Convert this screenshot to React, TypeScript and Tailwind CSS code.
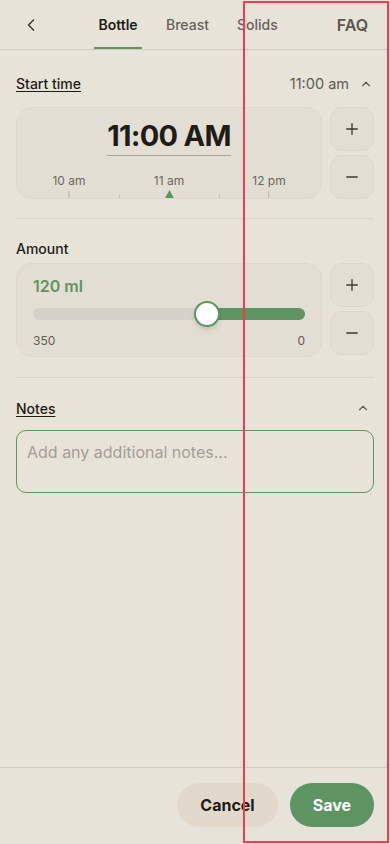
import { ChevronLeft, ChevronUp, Minus, Plus } from "lucide-react";

const font = { fontFamily: "Inter, 'Noto Sans', sans-serif" };

function StepButtons() {
  return (
    <div className="flex flex-col gap-1">
      <button className="flex h-[44px] w-[44px] items-center justify-center rounded-xl border border-[#dcd7cd] bg-[#e3ded4] text-[#3d3a35]">
        <Plus className="h-[18px] w-[18px]" strokeWidth={1.8} />
      </button>
      <button className="flex h-[44px] w-[44px] items-center justify-center rounded-xl border border-[#dcd7cd] bg-[#e3ded4] text-[#3d3a35]">
        <Minus className="h-[18px] w-[18px]" strokeWidth={1.8} />
      </button>
    </div>
  );
}

export default function App() {
  return (
    <div
      className="relative flex h-[844px] w-[390px] flex-col overflow-hidden bg-[#e8e3d9] text-[#1f1c18]"
      style={font}
    >
      {/* header */}
      <div className="flex h-[50px] shrink-0 items-stretch border-b border-[#d0cac0] px-4">
        <button className="flex w-[30px] items-center justify-center text-[#3d3a35]">
          <ChevronLeft className="h-5 w-5" strokeWidth={1.8} />
        </button>
        <div className="ml-[48px] flex items-stretch">
          <div className="flex w-[48px] flex-col items-center justify-center border-b-2 border-[#5e9462] pt-[2px] text-[14px] font-semibold text-[#1f1c18]">
            Bottle
          </div>
          <div className="ml-[24px] flex items-center text-[14px] font-medium text-[#66625b]">Breast</div>
          <div className="ml-[28px] flex items-center text-[14px] font-medium text-[#66625b]">Solids</div>
        </div>
        <div className="ml-auto mr-[6px] flex items-center text-[16px] font-semibold text-[#5a5650]">FAQ</div>
      </div>

      {/* start time */}
      <div className="px-4 pt-[23px]">
        <div className="flex items-center justify-between">
          <span className="text-[14px] font-medium underline underline-offset-2">Start time</span>
          <span className="mr-[1px] flex items-center gap-[10px] text-[14.5px] text-[#5f5b54]">
            11:00 am
            <ChevronUp className="h-[14px] w-[14px]" strokeWidth={2} />
          </span>
        </div>
        <div className="mt-[12px] flex gap-2">
          <div className="relative h-[92px] flex-1 overflow-hidden rounded-2xl border border-[#ddd8ce] bg-[#e3ded4]">
            <div className="flex justify-center pt-[10px]">
              <span className="border-b border-[#a9a49b] pb-[1px] text-[29px] font-bold leading-[36px] tracking-tight text-[#1f1c18]">
                11:00 AM
              </span>
            </div>
            <div className="relative mt-[17px] h-[26px]">
              {[
                { x: 52, label: "10 am" },
                { x: 152, label: "11 am" },
                { x: 252, label: "12 pm" },
              ].map((t) => (
                <div
                  key={t.label}
                  className="absolute top-0 flex -translate-x-1/2 flex-col items-center"
                  style={{ left: t.x }}
                >
                  <span className="text-[12px] leading-[16px] text-[#6b675f]">{t.label}</span>
                  <span className="mt-[2px] h-[8px] w-px bg-[#b5b0a6]" />
                </div>
              ))}
              {[102, 202].map((x) => (
                <span key={x} className="absolute top-[22px] h-[4px] w-px bg-[#c3beb4]" style={{ left: x }} />
              ))}
              <svg className="absolute top-[17px]" style={{ left: 147 }} width="11" height="10" viewBox="0 0 11 10">
                <path d="M5.5 0 L11 10 L0 10 Z" fill="#5e9462" />
              </svg>
            </div>
          </div>
          <StepButtons />
        </div>
      </div>

      <div className="mx-4 mt-[19px] h-px bg-[#d8d3c9]" />

      {/* amount */}
      <div className="px-4 pt-[19px]">
        <div className="text-[14px] font-medium">Amount</div>
        <div className="mt-[4px] flex gap-2">
          <div className="h-[94px] flex-1 rounded-2xl border border-[#ddd8ce] bg-[#e3ded4] px-4 pt-[12px]">
            <div className="text-[16px] font-semibold leading-[20px] text-[#5e9462]">120 ml</div>
            <div className="relative mt-[12px] flex h-[12px] items-center">
              <div className="h-[12px] w-[64%] rounded-l-full bg-[#d6d1c8]" />
              <div className="h-[12px] flex-1 rounded-r-full bg-[#5e9462]" />
              <div className="absolute left-[64%] top-1/2 h-[26px] w-[26px] -translate-x-1/2 -translate-y-1/2 rounded-full border-2 border-[#5e9462] bg-white shadow-md" />
            </div>
            <div className="mt-[12px] flex justify-between text-[12px] text-[#5f5b54]">
              <span>350</span>
              <span>0</span>
            </div>
          </div>
          <StepButtons />
        </div>
      </div>

      <div className="mx-4 mt-[20px] h-px bg-[#d8d3c9]" />

      {/* notes */}
      <div className="px-4 pt-[20px]">
        <div className="flex items-center justify-between">
          <span className="text-[14px] font-medium underline underline-offset-2">Notes</span>
          <ChevronUp className="mr-[4px] h-[14px] w-[14px] text-[#5f5b54]" strokeWidth={2} />
        </div>
        <textarea
          className="mt-[11px] block h-[63px] w-full resize-none rounded-[10px] border border-[#5e9462] bg-transparent px-[10px] py-[10px] text-[16px] leading-[22px] text-[#1f1c18] placeholder:text-[#a29e96] focus:outline-none"
          placeholder="Add any additional notes..."
        />
      </div>

      {/* footer */}
      <div className="mt-auto flex h-[77px] shrink-0 items-center justify-end gap-3 border-t border-[#d0cac0] px-4 pb-[4px] pt-[1px]">
        <button className="h-[44px] rounded-full bg-[#e2d9cc] px-[23px] text-[16px] font-bold text-[#1f1c18]">
          Cancel
        </button>
        <button className="h-[44px] rounded-full bg-[#5e9462] px-[23px] text-[16px] font-bold text-white">
          Save
        </button>
      </div>

      {/* highlight overlay */}
      <div className="pointer-events-none absolute bottom-[1px] left-[243px] right-[1px] top-[1px] border-2 border-[#f23c4c]" />
    </div>
  );
}
